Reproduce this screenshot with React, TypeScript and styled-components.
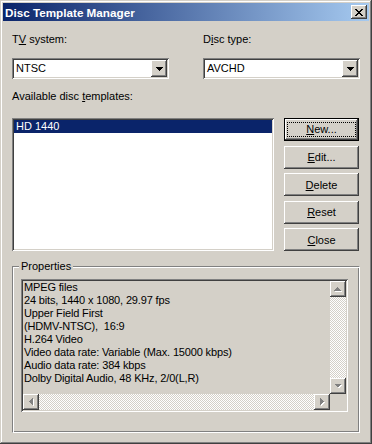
import React from 'react';
import styled, { createGlobalStyle, css } from 'styled-components';

const GlobalStyle = createGlobalStyle`
  html, body {
    margin: 0;
    padding: 0;
    background: #d4d0c8;
  }
  body {
    font-family: Tahoma, "Liberation Sans", Arial, sans-serif;
    font-size: 11px;
    color: #000;
  }
  * {
    box-sizing: border-box;
  }
`;

const raised = css`
  background: #d4d0c8;
  box-shadow: inset -1px -1px #404040, inset 1px 1px #fff, inset -2px -2px #808080, inset 2px 2px #d4d0c8;
`;

const sunken = css`
  box-shadow: inset 1px 1px #808080, inset -1px -1px #fff, inset 2px 2px #404040, inset -2px -2px #d4d0c8;
`;

const Window = styled.div`
  width: 372px;
  height: 444px;
  padding: 3px;
  background: #d4d0c8;
  box-shadow: inset -1px -1px #404040, inset 1px 1px #d4d0c8, inset -2px -2px #808080, inset 2px 2px #fff;
  display: flex;
  flex-direction: column;
`;

const TitleBar = styled.div`
  height: 18px;
  display: flex;
  align-items: center;
  justify-content: space-between;
  padding: 0 2px 0 2px;
  background: linear-gradient(to right, #0a246a, #a6caf0);
  color: #fff;
  font-weight: bold;
  font-size: 11.7px;
`;

const CloseBox = styled.div`
  ${raised};
  width: 16px;
  height: 14px;
  display: flex;
  align-items: center;
  justify-content: center;
  padding-right: 1px;
`;

const Client = styled.div`
  flex: 1;
  padding: 12px 9px 0 9px;
  display: flex;
  flex-direction: column;
`;

const TopGrid = styled.div`
  display: grid;
  grid-template-columns: 157px 157px;
  column-gap: 34px;
`;

const Field = styled.div`
  display: flex;
  flex-direction: column;
`;

const Label = styled.div<{ $gap: number; $top?: number }>`
  height: 13px;
  line-height: 13px;
  margin-top: ${p => p.$top ?? 0}px;
  margin-bottom: ${p => p.$gap}px;
`;

const ComboBox = styled.div`
  ${sunken};
  height: 21px;
  background: #fff;
  padding: 2px;
  display: flex;
  align-items: stretch;
`;

const ComboText = styled.div`
  flex: 1;
  padding-left: 2px;
  line-height: 17px;
`;

const ArrowButton = styled.div<{ $w: number; $h: number }>`
  ${raised};
  width: ${p => p.$w}px;
  height: ${p => p.$h}px;
  flex-shrink: 0;
  display: flex;
  align-items: center;
  justify-content: center;
`;

const MidRow = styled.div`
  display: flex;
`;

const ListBox = styled.div`
  ${sunken};
  width: 262px;
  height: 133px;
  background: #fff;
  padding: 2px;
`;

const ListItem = styled.div<{ $selected?: boolean }>`
  height: 13px;
  line-height: 13px;
  padding-left: 2px;
  background: ${p => (p.$selected ? '#0a246a' : 'transparent')};
  color: ${p => (p.$selected ? '#fff' : '#000')};
`;

const ButtonColumn = styled.div`
  margin-left: 10px;
  display: flex;
  flex-direction: column;
  justify-content: space-between;
`;

const PushButton = styled.div<{ $default?: boolean }>`
  ${raised};
  width: 75px;
  height: 23px;
  display: flex;
  align-items: center;
  justify-content: center;
  ${p =>
    p.$default &&
    css`
      border: 1px solid #000;
    `}
`;

const FocusRect = styled.span`
  outline: 1px dotted #000;
  outline-offset: 0;
  padding: 0 18px;
  line-height: 13px;
`;

const GroupBox = styled.div`
  position: relative;
  margin-top: 15px;
  width: 348px;
  height: 167px;
  border: 1px solid #808080;
  border-right-color: #fff;
  border-bottom-color: #fff;
  box-shadow: inset 1px 1px #fff, inset -1px -1px #808080;
  padding: 12px 11px 0 8px;
`;

const GroupLegend = styled.div`
  position: absolute;
  top: -7px;
  left: 6px;
  padding: 0 2px;
  background: #d4d0c8;
  line-height: 13px;
`;

const PropsBox = styled.div`
  ${sunken};
  width: 327px;
  height: 133px;
  padding: 2px;
  display: grid;
  grid-template-columns: 1fr 16px;
  grid-template-rows: 1fr 16px;
  background: #d4d0c8;
`;

const PropsText = styled.div`
  padding: 0 1px;
  line-height: 13px;
  letter-spacing: -0.15px;
  white-space: pre;
  overflow: hidden;
`;

const ScrollBar = styled.div<{ $vertical?: boolean }>`
  display: flex;
  flex-direction: ${p => (p.$vertical ? 'column' : 'row')};
  justify-content: space-between;
  background: repeating-conic-gradient(#d4d0c8 0 25%, #fff 0 50%) 0 0 / 2px 2px;
`;

const Corner = styled.div`
  background: #d4d0c8;
`;

type Dir = 'up' | 'down' | 'left' | 'right';

const tri: Record<Dir, string> = {
  up: '3.5,0 0,3.5 7,3.5',
  down: '0,0 7,0 3.5,3.5',
  left: '0,3.5 3.5,0 3.5,7',
  right: '0,0 3.5,3.5 0,7',
};

const GrayArrow: React.FC<{ dir: Dir }> = ({ dir }) => {
  const vert = dir === 'up' || dir === 'down';
  const w = vert ? 8 : 5;
  const h = vert ? 5 : 8;
  return (
    <svg width={w} height={h} viewBox={`0 0 ${w} ${h}`} shapeRendering="crispEdges">
      <polygon points={tri[dir]} fill="#fff" transform="translate(1 1)" />
      <polygon points={tri[dir]} fill="#808080" />
    </svg>
  );
};

const DropArrow = () => (
  <svg width="7" height="4" viewBox="0 0 7 4" shapeRendering="crispEdges">
    <rect x="0" y="0" width="7" height="1" fill="#000" />
    <rect x="1" y="1" width="5" height="1" fill="#000" />
    <rect x="2" y="2" width="3" height="1" fill="#000" />
    <rect x="3" y="3" width="1" height="1" fill="#000" />
  </svg>
);

const CloseGlyph = () => (
  <svg width="8" height="7" viewBox="0 0 8 7" shapeRendering="crispEdges">
    {[0, 1, 2, 3, 4, 5, 6].map(i => (
      <React.Fragment key={i}>
        <rect x={i} y={i} width="2" height="1" fill="#000" />
        <rect x={6 - i} y={i} width="2" height="1" fill="#000" />
      </React.Fragment>
    ))}
  </svg>
);

const Combo: React.FC<{ value: string }> = ({ value }) => (
  <ComboBox>
    <ComboText>{value}</ComboText>
    <ArrowButton $w={16} $h={17}>
      <DropArrow />
    </ArrowButton>
  </ComboBox>
);

const properties = [
  'MPEG files',
  '24 bits, 1440 x 1080, 29.97 fps',
  'Upper Field First',
  '(HDMV-NTSC),  16:9',
  'H.264 Video',
  'Video data rate: Variable (Max. 15000 kbps)',
  'Audio data rate: 384 kbps',
  'Dolby Digital Audio, 48 KHz, 2/0(L,R)',
];

const App: React.FC = () => (
  <>
    <GlobalStyle />
    <Window>
      <TitleBar>
        <span>Disc Template Manager</span>
        <CloseBox>
          <CloseGlyph />
        </CloseBox>
      </TitleBar>
      <Client>
        <TopGrid>
          <Field>
            <Label $gap={12}>
              T<u>V</u> system:
            </Label>
            <Combo value="NTSC" />
          </Field>
          <Field>
            <Label $gap={12}>
              D<u>i</u>sc type:
            </Label>
            <Combo value="AVCHD" />
          </Field>
        </TopGrid>
        <Label $gap={15} $top={11}>
          Available disc <u>t</u>emplates:
        </Label>
        <MidRow>
          <ListBox>
            <ListItem $selected>HD 1440</ListItem>
          </ListBox>
          <ButtonColumn>
            <PushButton $default>
              <FocusRect>
                <u>N</u>ew...
              </FocusRect>
            </PushButton>
            <PushButton>
              <span>
                <u>E</u>dit...
              </span>
            </PushButton>
            <PushButton>
              <span>
                <u>D</u>elete
              </span>
            </PushButton>
            <PushButton>
              <span>
                <u>R</u>eset
              </span>
            </PushButton>
            <PushButton>
              <span>
                <u>C</u>lose
              </span>
            </PushButton>
          </ButtonColumn>
        </MidRow>
        <GroupBox>
          <GroupLegend>Properties</GroupLegend>
          <PropsBox>
            <PropsText>
              {properties.map(line => (
                <div key={line}>{line}</div>
              ))}
            </PropsText>
            <ScrollBar $vertical>
              <ArrowButton $w={16} $h={16}>
                <GrayArrow dir="up" />
              </ArrowButton>
              <ArrowButton $w={16} $h={16}>
                <GrayArrow dir="down" />
              </ArrowButton>
            </ScrollBar>
            <ScrollBar>
              <ArrowButton $w={16} $h={16}>
                <GrayArrow dir="left" />
              </ArrowButton>
              <ArrowButton $w={16} $h={16}>
                <GrayArrow dir="right" />
              </ArrowButton>
            </ScrollBar>
            <Corner />
          </PropsBox>
        </GroupBox>
      </Client>
    </Window>
  </>
);

export default App;
